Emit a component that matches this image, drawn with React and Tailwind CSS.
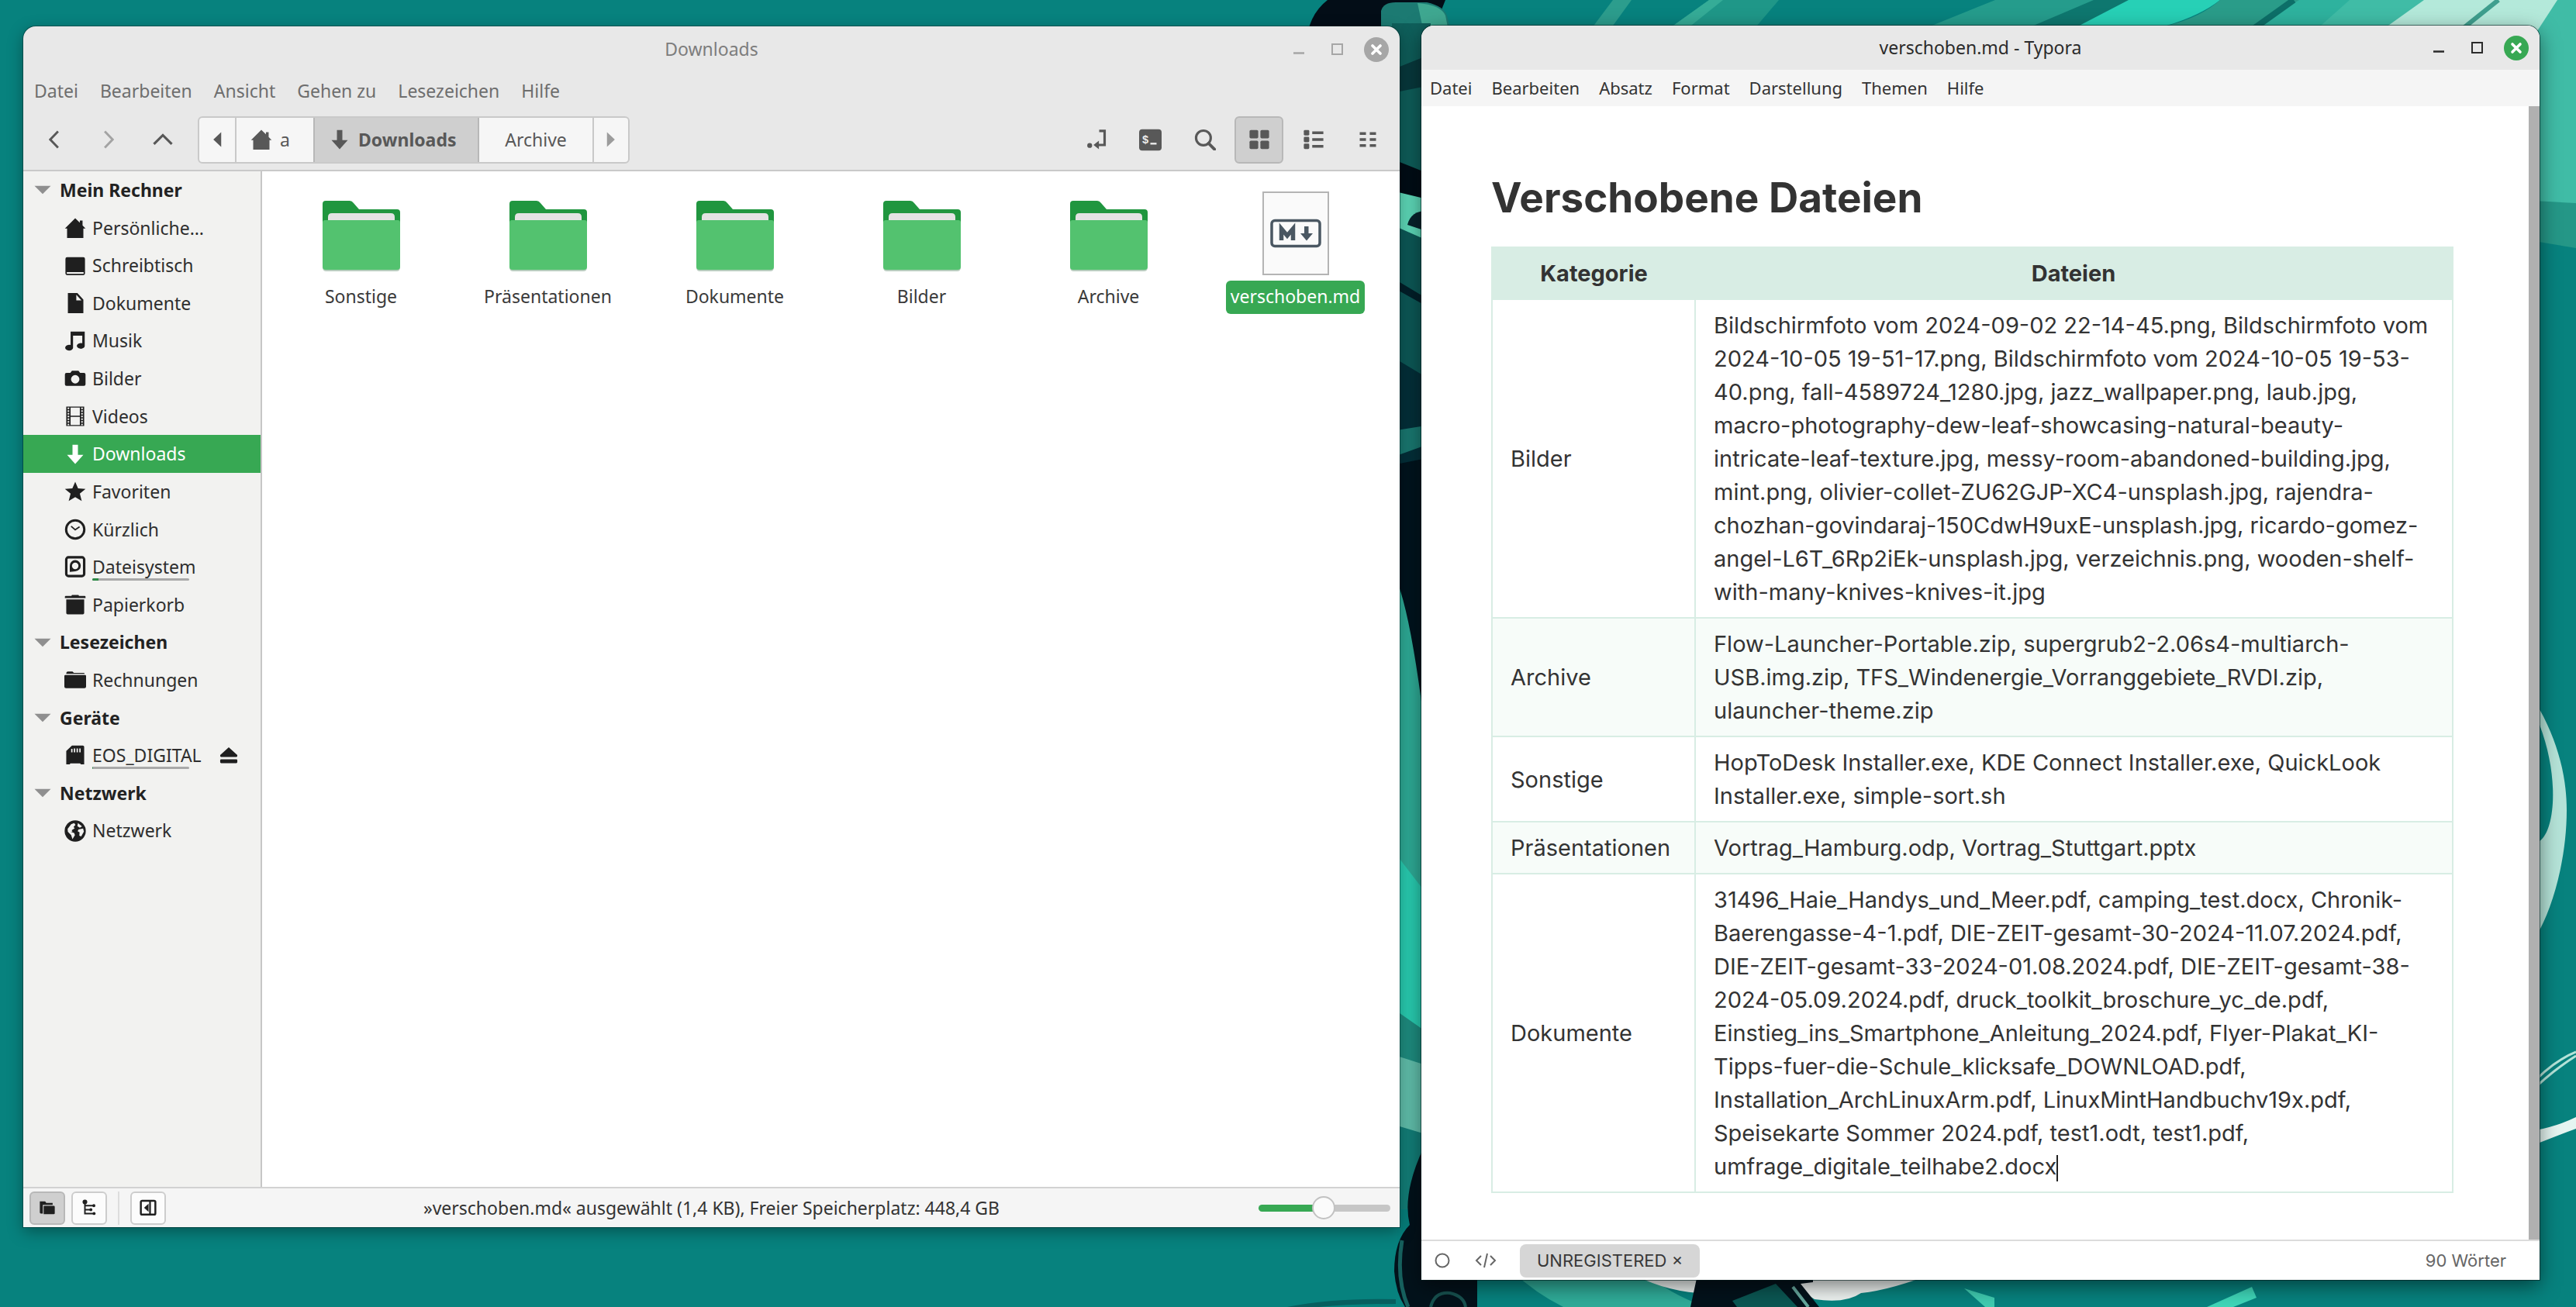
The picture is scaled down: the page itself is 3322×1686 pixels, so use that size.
import React from "react";

const ui = "font-['Noto_Sans',sans-serif]";
const doc = "font-['Inter',sans-serif]";

function Icon({ children, className = "size-7", box = "0 0 16 16" }) {
  return (
    <svg viewBox={box} className={`shrink-0 ${className}`} fill="currentColor" aria-hidden="true">
      {children}
    </svg>
  );
}

const line = { fill: "none", stroke: "currentColor" };

const glyphs = {
  home: (
    <path d="M8 0.8 L0.4 8.4 H2 V15.4 H14 V8.4 H15.6 L13.4 6.2 V2.6 H11.4 V4.2 Z" />
  ),
  desktop: (
    <path
      fillRule="evenodd"
      d="M2 1.6 H14 Q15.2 1.6 15.2 2.8 V13.6 Q15.2 14.8 14 14.8 H2 Q.8 14.8 .8 13.6 V2.8 Q.8 1.6 2 1.6 Z M1.8 12.6 V13.9 H14.2 V12.6 Z"
    />
  ),
  document: (
    <path
      fillRule="evenodd"
      d="M2.6 .6 H9.6 L14 5.4 V15.4 H2.6 Z M8.8 1.8 V6 H12.6 Z"
    />
  ),
  music: (
    <path d="M4.6 1 H15 V11.4 A2.9 2.1 0 1 1 13.2 9.6 V4 H6.4 V12.6 A2.9 2.1 0 1 1 4.6 10.9 Z" />
  ),
  camera: (
    <path
      fillRule="evenodd"
      d="M5.6 2.4 H10.4 L11.6 4 H14.4 Q15.6 4 15.6 5.2 V12.4 Q15.6 13.6 14.4 13.6 H1.6 Q.4 13.6 .4 12.4 V5.2 Q.4 4 1.6 4 H4.4 Z M8 5.6 A3.1 3.1 0 1 0 8 11.8 A3.1 3.1 0 1 0 8 5.6 Z"
    />
  ),
  film: (
    <>
      <path
        fillRule="evenodd"
        d="M1.4 .8 H14.6 V15.2 H1.4 Z M4.6 1.6 V7.6 H11.4 V1.6 Z M4.6 8.4 V14.4 H11.4 V8.4 Z"
      />
      <path d="M3 1.6 V14.6 M13 1.6 V14.6" stroke="#f2f2f0" strokeWidth="1.2" strokeDasharray="1.1 .9" />
    </>
  ),
  download: <path d="M6 1 H10 V8.4 H14 L8 15.2 L2 8.4 H6 Z" />,
  star: <path d="M8 .8 L10.1 5.7 L15.6 6.1 L11.4 9.6 L12.8 15 L8 12.1 L3.2 15 L4.6 9.6 L.4 6.1 L5.9 5.7 Z" />,
  clock: (
    <>
      <circle cx="8" cy="8" r="6.7" {...line} strokeWidth="1.7" />
      <path d="M5 5.6 L8 8.2 L11.2 6" {...line} strokeWidth="1" />
    </>
  ),
  disk: (
    <>
      <rect x="1.4" y="1.1" width="13.2" height="13.8" rx="1.6" {...line} strokeWidth="1.8" />
      <path fillRule="evenodd" d="M8 3.2 A4.1 4.1 0 1 1 8 11.4 L4 11.8 V7.4 A4.1 4.1 0 0 1 8 3.2 Z M8 5 A2.4 2.4 0 1 0 8 9.8 A2.4 2.4 0 1 0 8 5 Z" />
    </>
  ),
  trash: (
    <path d="M5.6 .8 H10.4 L10.8 1.5 H15 Q15.6 1.5 15.6 2.2 V3.2 H.4 V2.2 Q.4 1.5 1 1.5 H5.2 Z M1.4 4.2 H14.6 V14.2 Q14.6 15.2 13.6 15.2 H2.4 Q1.4 15.2 1.4 14.2 Z" />
  ),
  folder: (
    <path d="M2.6 1.8 H6 L7 2.8 H14 Q15 2.8 15 3.6 H1.4 Q1.4 1.8 2.6 1.8 Z M.8 4.4 H15.2 Q16 4.4 16 5.2 V13 Q16 14.2 14.8 14.2 H1.2 Q0 14.2 0 13 V5.2 Q0 4.4 .8 4.4 Z" />
  ),
  card: (
    <path
      fillRule="evenodd"
      d="M5.6 1 H13.6 Q14.6 1 14.6 2 V14.8 H12.2 L11.6 14.2 H4.4 L4 14.8 H1.4 V5 Z M5 3.4 V6 H6 V3.4 Z M7 3.2 V6 H8 V3.2 Z M9 3.2 V6 H10 V3.2 Z M11 3.2 V6 H12 V3.2 Z"
    />
  ),
  globe: (
    <>
      <circle cx="8" cy="8" r="7.8" />
      <path
        fill="#f2f2f0"
        d="M2.4 6.4 L5 3 L7.2 2.2 L8.2 3.4 L6.8 5 L7.6 6 L5.4 7.4 L6 8.4 L4.6 8.6 L7.2 9.4 L7.8 11 L6 14 L5 11 L2.6 8.6 Z M10 2.2 L13 4.6 L11.4 5.6 L9.6 4.4 Z M10.4 6.8 L13.8 6.2 L14.4 8.4 L12.4 12 L11 11.4 L11.2 9 L9.8 8.2 Z"
      />
    </>
  ),
  eject: (
    <path d="M8 1.8 L14.8 8 Q15 9.6 14 9.6 H2 Q1 9.6 1.2 8 Z M2 11.4 H14 Q14.8 11.4 14.8 12.2 V13.6 Q14.8 14.4 14 14.4 H2 Q1.2 14.4 1.2 13.6 V12.2 Q1.2 11.4 2 11.4 Z" />
  ),
  back: <path d="M11 1.6 L4.8 8 L11 14.4" {...line} strokeWidth="1.8" />,
  forward: <path d="M5 1.6 L11.2 8 L5 14.4" {...line} strokeWidth="1.8" />,
  up: <path d="M1.4 11.4 L8 4.8 L14.6 11.4" {...line} strokeWidth="1.8" />,
  triLeft: <path d="M11 2.6 V13.4 L5.2 8 Z" />,
  triRight: <path d="M5 2.6 V13.4 L10.8 8 Z" />,
  triDown: <path d="M2 5 H14 L8 11 Z" />,
  location: (
    <>
      <path d="M10 1.6 H14 V12 H8.6" {...line} strokeWidth="1.8" />
      <path d="M5.8 12 L9.8 8.8 V15.2 Z" />
      <circle cx="3" cy="12.4" r="1.8" />
    </>
  ),
  terminal: (
    <>
      <rect x="0" y=".4" width="16" height="15.2" rx="2.2" />
      <text x="2" y="10.6" fontSize="8" fontWeight="700" fill="#ececec" fontFamily="Liberation Mono, monospace">
        $
      </text>
      <rect x="8" y="10" width="4.4" height="1.3" fill="#ececec" />
    </>
  ),
  search: (
    <>
      <circle cx="6.8" cy="6.8" r="5.4" {...line} strokeWidth="1.8" />
      <path d="M10.6 10.8 L15 15.2" {...line} strokeWidth="2.2" strokeLinecap="round" />
    </>
  ),
  grid: (
    <>
      <rect x=".8" y="1" width="6.4" height="6.2" rx="1" />
      <rect x="8.8" y="1" width="6.4" height="6.2" rx="1" />
      <rect x=".8" y="8.8" width="6.4" height="6.2" rx="1" />
      <rect x="8.8" y="8.8" width="6.4" height="6.2" rx="1" />
    </>
  ),
  list: (
    <>
      <rect x=".8" y="1" width="4" height="4" rx=".8" />
      <rect x=".8" y="6" width="4" height="4" rx=".8" />
      <rect x=".8" y="11" width="4" height="4" rx=".8" />
      <path d="M7 3 H15.2 M7 8 H15.2 M7 13 H15.2" {...line} strokeWidth="2" />
    </>
  ),
  compact: (
    <path d="M2 3.6 H6.6 M9.4 3.6 H14 M2 8 H6.6 M9.4 8 H14 M2 12.4 H6.6 M9.4 12.4 H14" {...line} strokeWidth="2" />
  ),
  places: (
    <>
      <path d="M1 2 H6 L7 3.4 H13 V5.2 H3.8 V13.4 H2 Q1 13.4 1 12.4 Z" />
      <path d="M5 6.2 H14 Q15 6.2 15 7.2 V13 Q15 14 14 14 H4.6 V6.6 Z" />
    </>
  ),
  tree: (
    <>
      <path d="M4 2 V13.4 H12 M4 6 H12 M4 9.8 H10" {...line} strokeWidth="1.4" />
      <circle cx="4" cy="2.6" r="2.2" />
      <circle cx="12.4" cy="6" r="1.4" />
      <circle cx="9.6" cy="9.8" r="1.4" />
      <circle cx="12.6" cy="13.4" r="1.4" />
    </>
  ),
  panel: (
    <>
      <rect x="1.2" y="1.4" width="13.6" height="13" rx="1.2" {...line} strokeWidth="1.8" />
      <rect x="9" y="2" width="1.6" height="12" />
      <path d="M8.4 4.2 V11.8 L4.2 8 Z" />
    </>
  ),
};

function WindowButtons({ color, close, labels }) {
  return (
    <div className={`flex items-center gap-[18px] ${color}`}>
      <button type="button" aria-label={`${labels} minimieren`} className="size-8">
        <svg viewBox="0 0 32 32" className="size-8"><path d="M9 20.5H23" stroke="currentColor" strokeWidth="2.4" /></svg>
      </button>
      <button type="button" aria-label={`${labels} maximieren`} className="size-8">
        <svg viewBox="0 0 32 32" className="size-8"><rect x="9" y="9" width="13" height="13" fill="none" stroke="currentColor" strokeWidth="2" /></svg>
      </button>
      <button type="button" aria-label={`${labels} schließen`} className={`size-8 rounded-full text-white ${close}`}>
        <svg viewBox="0 0 32 32" className="size-8"><path d="M11 11L21 21M21 11L11 21" stroke="currentColor" strokeWidth="3.6" strokeLinecap="round" /></svg>
      </button>
    </div>
  );
}

function TitleBar({ title, text, color, close, className }) {
  return (
    <header className={`grid shrink-0 grid-cols-[1fr_auto_1fr] items-center px-3.5 text-[23px] ${className}`}>
      <span />
      <h2 className={text}>{title}</h2>
      <div className="flex justify-end">
        <WindowButtons color={color} close={close} labels={title} />
      </div>
    </header>
  );
}

function ToolButton({ icon, label, active, faded, size }) {
  return (
    <button
      type="button"
      aria-label={label}
      className={`flex h-[61px] w-[63px] items-center justify-center rounded-md border-2 ${
        active ? "border-[#b8b8b8] bg-[#cfcfcf]" : "border-transparent"
      } ${faded ? "text-[#a3a3a3]" : "text-[#585858]"}`}
    >
      <Icon className={size}>{glyphs[icon]}</Icon>
    </button>
  );
}

const sections = [
  {
    title: "Mein Rechner",
    items: [
      { icon: "home", label: "Persönliche…" },
      { icon: "desktop", label: "Schreibtisch" },
      { icon: "document", label: "Dokumente" },
      { icon: "music", label: "Musik" },
      { icon: "camera", label: "Bilder" },
      { icon: "film", label: "Videos" },
      { icon: "download", label: "Downloads", active: true },
      { icon: "star", label: "Favoriten" },
      { icon: "clock", label: "Kürzlich" },
      { icon: "disk", label: "Dateisystem", used: 6 },
      { icon: "trash", label: "Papierkorb" },
    ],
  },
  { title: "Lesezeichen", items: [{ icon: "folder", label: "Rechnungen" }] },
  { title: "Geräte", items: [{ icon: "card", label: "EOS_DIGITAL", used: 1, eject: true }] },
  { title: "Netzwerk", items: [{ icon: "globe", label: "Netzwerk" }] },
];

function Sidebar() {
  return (
    <nav className="w-[308px] shrink-0 border-r-2 border-[#c6c6c6] bg-[#f2f2f0] text-[23px] text-[#2e2e2e]">
      <div className="grid h-[875px] auto-rows-fr">
        {sections.map((s) => (
          <React.Fragment key={s.title}>
            <button type="button" className="flex items-center gap-2 pl-[11px] text-left font-bold text-[#222]">
              <span className="text-[#8f8f8f]"><Icon>{glyphs.triDown}</Icon></span>
              {s.title}
            </button>
            {s.items.map((it) => (
              <div
                key={it.label}
                className={`flex items-center ${it.active ? "bg-[#37a853] text-white" : ""}`}
              >
                <a href={`#${it.label}`} className="flex h-full flex-1 items-center gap-2 pl-[53px]">
                  <span className={it.active ? "text-white" : "text-[#1f1f1f]"}>
                    <Icon>{glyphs[it.icon]}</Icon>
                  </span>
                  <span className="relative">
                    {it.label}
                    {it.used && (
                      <span className="absolute bottom-0 left-0 block h-[3px] w-[125px] overflow-hidden rounded-full bg-[#a9a9a9]">
                        <span className="block h-full bg-[#2f8a48]" style={{ width: `${it.used}%` }} />
                      </span>
                    )}
                  </span>
                </a>
                {it.eject && (
                  <button type="button" aria-label="Auswerfen" className="mr-[28px] text-[#1f1f1f]">
                    <Icon className="size-[26px]">{glyphs.eject}</Icon>
                  </button>
                )}
              </div>
            ))}
          </React.Fragment>
        ))}
      </div>
    </nav>
  );
}

function FolderArt() {
  return (
    <svg viewBox="0 0 100 108" className="h-[108px] w-[100px]" aria-hidden="true">
      <path d="M4 12 H35 Q38 12 40 15 L47 23 H96 Q100 23 100 27 V60 H0 V16 Q0 12 4 12 Z" fill="#20963f" />
      <path d="M12 28 H88 Q93 28 93 33 V60 H7 V33 Q7 28 12 28 Z" fill="#e3e3e3" />
      <path d="M0 40 H100 V98 Q100 103 95 103 H5 Q0 103 0 98 Z" fill="#b9cdbf" />
      <path d="M3 37 H97 Q100 37 100 40 V97 Q100 101 96 101 H4 Q0 101 0 97 V40 Q0 37 3 37 Z" fill="#53c26f" />
    </svg>
  );
}

function MarkdownArt() {
  return (
    <svg viewBox="0 0 86 108" className="h-[108px] w-[86px]" aria-hidden="true">
      <rect x="1" y="1" width="84" height="106" fill="#fafafa" stroke="#b4b4b4" strokeWidth="2" />
      <rect x="12" y="37.5" width="62" height="33" rx="4" fill="#fafafa" stroke="#4a5762" strokeWidth="3.5" />
      <path d="M24.5 63 V48 L32 57 L39.5 48 V63" fill="none" stroke="#4a5762" strokeWidth="5.5" />
      <path d="M54 45 H59.5 V54 H65 L57 63.500 L49 54 H54 Z" fill="#4a5762" />
    </svg>
  );
}

const files = ["Sonstige", "Präsentationen", "Dokumente", "Bilder", "Archive", "verschoben.md"];

function FileManager() {
  return (
    <section
      aria-label="Dateiverwaltung"
      className={`mb-[103px] mt-[34px] flex min-w-0 flex-1 flex-col overflow-hidden rounded-t-2xl bg-[#e8e8e8] shadow-[0_0_0_1px_rgba(0,40,40,0.45),0_6px_20px_rgba(0,0,0,0.35)] ${ui}`}
    >
      <TitleBar title="Downloads" text="text-[#7d7d7d]" color="text-[#a6a6a6]" close="bg-[#a6a6a6]" className="h-[59px]" />
      <div className="flex h-12 shrink-0 items-center gap-7 pl-3.5 text-[23px] text-[#6e6e6e]">
        {["Datei", "Bearbeiten", "Ansicht", "Gehen zu", "Lesezeichen", "Hilfe"].map((m) => (
          <button type="button" key={m}>{m}</button>
        ))}
      </div>
      <div className="flex h-20 shrink-0 items-center justify-between border-b-2 border-[#c9c9c9] pl-2 pr-2.5">
        <div className="flex items-center">
          <div className="flex gap-[7px]">
            <ToolButton icon="back" label="Zurück" size="size-[26px]" />
            <ToolButton icon="forward" label="Vorwärts" faded size="size-[26px]" />
            <ToolButton icon="up" label="Übergeordnet" size="size-[28px]" />
          </div>
          <div className="ml-3.5 flex h-[61px] overflow-hidden rounded-md border-2 border-[#c9c9c9] bg-[#f6f6f6] text-[23px] text-[#585858]">
            <button type="button" aria-label="Pfad zurück" className="flex w-[48px] items-center justify-center border-r-2 border-[#c9c9c9]">
              <Icon>{glyphs.triLeft}</Icon>
            </button>
            <button type="button" className="flex w-[99px] items-center gap-2.5 pl-[18px]">
              <Icon>{glyphs.home}</Icon>a
            </button>
            <button type="button" className="flex w-[214px] items-center gap-2.5 border-x-2 border-[#b8b8b8] bg-[#cfcfcf] pl-[18px] font-bold">
              <Icon>{glyphs.download}</Icon>Downloads
            </button>
            <button type="button" className="w-[146px]">Archive</button>
            <button type="button" aria-label="Pfad vor" className="flex w-[46px] items-center justify-center border-l-2 border-[#c9c9c9] text-[#9c9c9c]">
              <Icon>{glyphs.triRight}</Icon>
            </button>
          </div>
        </div>
        <div className="flex gap-[7px]">
          <ToolButton icon="location" label="Adresse" size="size-7" />
          <ToolButton icon="terminal" label="Terminal" size="size-[29px]" />
          <ToolButton icon="search" label="Suchen" size="size-7" />
          <ToolButton icon="grid" label="Symbolansicht" active size="size-7" />
          <ToolButton icon="list" label="Listenansicht" size="size-7" />
          <ToolButton icon="compact" label="Kompaktansicht" size="size-7" />
        </div>
      </div>
      <div className="flex min-h-0 flex-1">
        <Sidebar />
        <div className="grid flex-1 auto-rows-min grid-cols-6 bg-white pl-[7px] pr-3.5 pt-[26px] text-[23px] text-[#3a3a3a]">
          {files.map((f) => {
            const md = f.endsWith(".md");
            return (
              <button type="button" key={f} className="flex flex-col items-center gap-[7px]">
                {md ? <MarkdownArt /> : <FolderArt />}
                <span className={`h-[43px] rounded-md px-1.5 leading-[41px] ${md ? "bg-[#37a853] text-white" : ""}`}>{f}</span>
              </button>
            );
          })}
        </div>
      </div>
      <footer className="grid h-[52px] shrink-0 grid-cols-[1fr_auto_1fr] items-center border-t-2 border-[#d2d2d2] bg-[#f5f5f5] px-2 text-[#1f1f1f]">
        <div className="flex items-center gap-2">
          <button type="button" aria-label="Orte" className="flex h-[43px] w-[46px] items-center justify-center rounded-md border-2 border-[#b8b8b8] bg-[#cfcfcf]">
            <Icon className="size-[22px]">{glyphs.places}</Icon>
          </button>
          <button type="button" aria-label="Baum" className="flex h-[43px] w-[46px] items-center justify-center rounded-md border-2 border-[#cdcdcd] bg-[#fcfcfc]">
            <Icon className="size-[22px]">{glyphs.tree}</Icon>
          </button>
          <span className="mx-1.5 h-[43px] w-0.5 bg-[#dddddd]" />
          <button type="button" aria-label="Seitenleiste" className="flex h-[43px] w-[46px] items-center justify-center rounded-md border-2 border-[#cdcdcd] bg-[#fcfcfc]">
            <Icon className="size-[22px]">{glyphs.panel}</Icon>
          </button>
        </div>
        <p className="text-[23px] leading-8 text-[#333]">»verschoben.md« ausgewählt (1,4 KB), Freier Speicherplatz: 448,4 GB</p>
        <div className="flex justify-end pr-1">
          <input
            type="range"
            aria-label="Vergrößerung"
            defaultValue={49}
            className="h-[9px] w-[170px] appearance-none rounded-full bg-[linear-gradient(to_right,#37a853_50%,#c6c6c6_50%)] [&::-webkit-slider-thumb]:size-[30px] [&::-webkit-slider-thumb]:appearance-none [&::-webkit-slider-thumb]:rounded-full [&::-webkit-slider-thumb]:border-2 [&::-webkit-slider-thumb]:border-[#c2c2c2] [&::-webkit-slider-thumb]:bg-[#fbfbfb]"
          />
        </div>
      </footer>
    </section>
  );
}

const rows = [
  ["Bilder", [
    "Bildschirmfoto vom 2024-09-02 22-14-45.png, Bildschirmfoto vom",
    "2024-10-05 19-51-17.png, Bildschirmfoto vom 2024-10-05 19-53-",
    "40.png, fall-4589724_1280.jpg, jazz_wallpaper.png, laub.jpg,",
    "macro-photography-dew-leaf-showcasing-natural-beauty-",
    "intricate-leaf-texture.jpg, messy-room-abandoned-building.jpg,",
    "mint.png, olivier-collet-ZU62GJP-XC4-unsplash.jpg, rajendra-",
    "chozhan-govindaraj-150CdwH9uxE-unsplash.jpg, ricardo-gomez-",
    "angel-L6T_6Rp2iEk-unsplash.jpg, verzeichnis.png, wooden-shelf-",
    "with-many-knives-knives-it.jpg",
  ]],
  ["Archive", [
    "Flow-Launcher-Portable.zip, supergrub2-2.06s4-multiarch-",
    "USB.img.zip, TFS_Windenergie_Vorranggebiete_RVDI.zip,",
    "ulauncher-theme.zip",
  ]],
  ["Sonstige", [
    "HopToDesk Installer.exe, KDE Connect Installer.exe, QuickLook",
    "Installer.exe, simple-sort.sh",
  ]],
  ["Präsentationen", ["Vortrag_Hamburg.odp, Vortrag_Stuttgart.pptx"]],
  ["Dokumente", [
    "31496_Haie_Handys_und_Meer.pdf, camping_test.docx, Chronik-",
    "Baerengasse-4-1.pdf, DIE-ZEIT-gesamt-30-2024-11.07.2024.pdf,",
    "DIE-ZEIT-gesamt-33-2024-01.08.2024.pdf, DIE-ZEIT-gesamt-38-",
    "2024-05.09.2024.pdf, druck_toolkit_broschure_yc_de.pdf,",
    "Einstieg_ins_Smartphone_Anleitung_2024.pdf, Flyer-Plakat_KI-",
    "Tipps-fuer-die-Schule_klicksafe_DOWNLOAD.pdf,",
    "Installation_ArchLinuxArm.pdf, LinuxMintHandbuchv19x.pdf,",
    "Speisekarte Sommer 2024.pdf, test1.odt, test1.pdf,",
    "umfrage_digitale_teilhabe2.docx",
  ]],
];

function Editor() {
  return (
    <section
      aria-label="Editor"
      className="mb-[35px] mt-[33px] flex min-w-0 flex-1 flex-col overflow-hidden rounded-t-2xl bg-white shadow-[0_0_0_1px_rgba(0,30,30,0.6),0_8px_26px_rgba(0,0,0,0.5)]"
    >
      <TitleBar title="verschoben.md - Typora" text="text-[#2b2b2b]" color="text-[#2b2b2b]" close="bg-[#37a853]" className={`h-[57px] bg-[#e8e8e8] ${ui}`} />
      <div className={`flex h-[47px] shrink-0 items-center gap-[25px] bg-[#f5f5f5] pl-[11px] text-[22px] text-[#333] ${ui}`}>
        {["Datei", "Bearbeiten", "Absatz", "Format", "Darstellung", "Themen", "Hilfe"].map((m) => (
          <button type="button" key={m}>{m}</button>
        ))}
      </div>
      <div className="flex min-h-0 flex-1">
        <article className={`min-w-0 flex-1 pl-[90px] pr-[97px] pt-[86px] text-[#333] ${doc}`}>
          <h1 className="text-[53px] font-bold leading-[64px]">Verschobene Dateien</h1>
          <table className="mt-[31px] w-full border-collapse border-2 border-[#d8ede4] text-[29px] leading-[43px]">
            <thead>
              <tr className="bg-[#d8ede4]">
                <th className="w-[262px] px-[23px] py-[11px] font-bold">Kategorie</th>
                <th className="px-[23px] py-[11px] font-bold">Dateien</th>
              </tr>
            </thead>
            <tbody>
              {rows.map(([name, lines], i) => (
                <tr key={name} className="even:bg-[#f7fcf9]">
                  <td className="border-2 border-[#d8ede4] px-[23px] py-[11px]">{name}</td>
                  <td className="whitespace-nowrap border-2 border-[#d8ede4] px-[23px] py-[11px]">
                    {lines.map((l, n) => (
                      <React.Fragment key={l}>
                        {n > 0 && <br />}
                        {l}
                      </React.Fragment>
                    ))}
                    {i === rows.length - 1 && <span className="inline-block h-[34px] w-0.5 bg-[#222] align-middle" />}
                  </td>
                </tr>
              ))}
            </tbody>
          </table>
        </article>
        <div className="w-3.5 shrink-0 bg-[#b0b0b0]" />
      </div>
      <footer className={`flex h-[52px] shrink-0 items-center justify-between border-t-2 border-[#dcdcdc] pl-[17px] pr-[43px] text-[22px] text-[#666] ${doc}`}>
        <div className="flex items-center">
          <button type="button" aria-label="Seitenleiste">
            <svg viewBox="0 0 20 20" className="size-5"><circle cx="10" cy="10" r="8.5" fill="none" stroke="currentColor" strokeWidth="2" /></svg>
          </button>
          <button type="button" aria-label="Quelltext" className="ml-8">
            <svg viewBox="0 0 28 20" className="h-5 w-7" fill="none" stroke="currentColor" strokeWidth="2"><path d="M8 4L2 10L8 16M20 4L26 10L20 16M16 1L12 19" /></svg>
          </button>
          <button type="button" className="ml-[30px] h-[43px] rounded-lg bg-[#d6d6d6] px-[22px] text-[#383838]">UNREGISTERED ×</button>
        </div>
        <span>90 Wörter</span>
      </footer>
    </section>
  );
}

function Wallpaper() {
  return (
    <svg viewBox="0 0 3322 1686" preserveAspectRatio="xMidYMid slice" className="absolute inset-0 size-full" aria-hidden="true">
      <rect width="3322" height="1686" fill="#07827e" />
      <path d="M1684 60 Q1686 20 1712 0 H1864 L1840 60 Z" fill="#030d17" />
      <path d="M1781 60 V14 Q1784 3 1800 3 H1840 Q1862 8 1866 20 L1876 60 Z" fill="#1c7a72" />
      <path d="M1828 4 Q1858 6 1864 20 L1872 60 H1840 Z" fill="#3fa891" />
      <path d="M2080 0 H2104 L2075 40 H2050 Z" fill="#2c9d8d" />
      <path d="M2204 0 H2294 L2260 40 H2148 Z" fill="#1f9788" />
      <path d="M2204 0 H2222 L2172 40 H2148 Z" fill="#35ac97" />
      <path d="M2573 0 H2734 L2616 40 H2474 Z" fill="#259c8c" />
      <path d="M2700 0 H2770 L2675 40 H2606 Z" fill="#0e776f" />
      <path d="M2745 0 H2863 Q2830 26 2767 40 H2668 Z" fill="#27d0b6" />
      <path d="M2863 0 H3322 V270 H3200 V40 H2760 Q2830 30 2863 0 Z" fill="#2a9c89" />
      <path d="M2965 0 H3322 V262 H3200 V40 H2900 Z" fill="#2eb29e" />
      <path d="M2958 0 L2902 40" stroke="#0d6f68" strokeWidth="8" />
      <path d="M3030 0 H3322 V262 H3200 V40 H2985 Z" fill="#40bca6" />
      <path d="M3126 0 H3298 L3272 40 H3070 Z" fill="#b4e9da" />
      <path d="M3222 0 L3172 40" stroke="#3f9f8e" strokeWidth="6" />
      <path d="M3250 258 L3322 262 V320 L3250 308 Z" fill="#259787" />
      <path d="M3275 915 C3300 960 3310 1005 3310 1045 C3310 1100 3296 1160 3275 1200 V1085 C3296 1070 3300 1000 3275 935 Z" fill="#b5e3d8" />
      <path d="M3260 1404 Q3290 1370 3322 1357 M3260 1412 Q3290 1382 3322 1362" fill="none" stroke="#b5e3d8" strokeWidth="3" />
      <path d="M3270 1458 Q3300 1452 3322 1441 V1456 Q3300 1464 3270 1476 Z" fill="#e5f5f1" />

      <g>
        <rect x="1795" y="30" width="50" height="190" fill="#0f5f5b" />
        <path d="M1795 90 L1845 70 V110 L1795 120 Z" fill="#08393d" />
        <path d="M1795 205 L1845 225 V275 L1795 250 Z" fill="#020d16" />
        <path d="M1795 246 L1845 258 V320 L1795 290 Z" fill="#5fdcbb" />
        <path d="M1815 290 Q1820 270 1845 272 V300 Z" fill="#08242c" />
        <path d="M1795 290 L1845 312 V560 H1795 Z" fill="#0d5a58" />
        <path d="M1795 358 L1845 388 V398 L1795 370 Z" fill="#03202a" />
        <path d="M1795 460 L1845 490 V780 H1795 Z" fill="#04303a" />
        <path d="M1795 556 L1845 548 V572 L1795 590 Z" fill="#1a7a72" />
        <path d="M1795 600 L1845 590 V960 H1795 Z" fill="#02141e" />
        <path d="M1795 735 Q1815 770 1833 905 L1845 940 V1180 H1795 Z" fill="#2fae99" />
        <path d="M1795 1095 L1845 1160 V1340 L1795 1310 Z" fill="#29d0b4" />
        <path d="M1795 1300 L1845 1335 V1390 L1795 1370 Z" fill="#1f8f82" />
        <path d="M1795 1360 L1845 1376 V1470 L1795 1450 Z" fill="#62c2ae" />
        <path d="M1795 1450 L1845 1465 V1560 H1795 Z" fill="#13807a" />
        <path d="M1836 1480 Q1808 1540 1818 1580 Q1798 1600 1798 1640 Q1800 1668 1812 1686 H1905 V1600 L1845 1480 Z" fill="#03121b" />
        <path d="M1808 1600 Q1800 1650 1816 1686" fill="none" stroke="#17615e" strokeWidth="5" />
        <path d="M1845 1686 Q1850 1666 1870 1668 Q1888 1672 1890 1686" fill="none" stroke="#17514f" strokeWidth="4" />
      </g>
      <path d="M1660 1686 Q1720 1674 1800 1676 V1682 Q1740 1682 1700 1686 Z" fill="#075f5f" />
      <path d="M1950 1640 H2120 Q2150 1668 2200 1686 H2016 Q1980 1668 1950 1640 Z" fill="#2fab98" />
      <path d="M2100 1640 H2500 Q2440 1664 2400 1668 Q2380 1682 2340 1676 L2300 1650 L2190 1668 Q2140 1664 2100 1640 Z" fill="#eef3f1" />
      <path d="M2190 1640 H2338 V1654 L2322 1656 L2346 1686 H2180 Z" fill="#03121b" />
      <path d="M2234 1678 L2290 1656 L2318 1686 H2240 Z" fill="#0b5753" />
      <path d="M2312 1660 L2332 1686" stroke="#66a79d" strokeWidth="4" />
      <path d="M2533 1662 L2572 1674 V1686 H2560 Z" fill="#40cbb0" />
      <path d="M2904 1660 L2910 1674 L2880 1686 H2846 Z" fill="#3fd6b8" />
    </svg>
  );
}

export default function App() {
  return (
    <main className="relative flex h-screen gap-7 overflow-hidden bg-[#07827e] pl-[30px] pr-[47px]">
      <Wallpaper />
      <div className="relative flex min-w-0 flex-[1775]"><FileManager /></div>
      <div className="relative flex min-w-0 flex-[1442]"><Editor /></div>
    </main>
  );
}
